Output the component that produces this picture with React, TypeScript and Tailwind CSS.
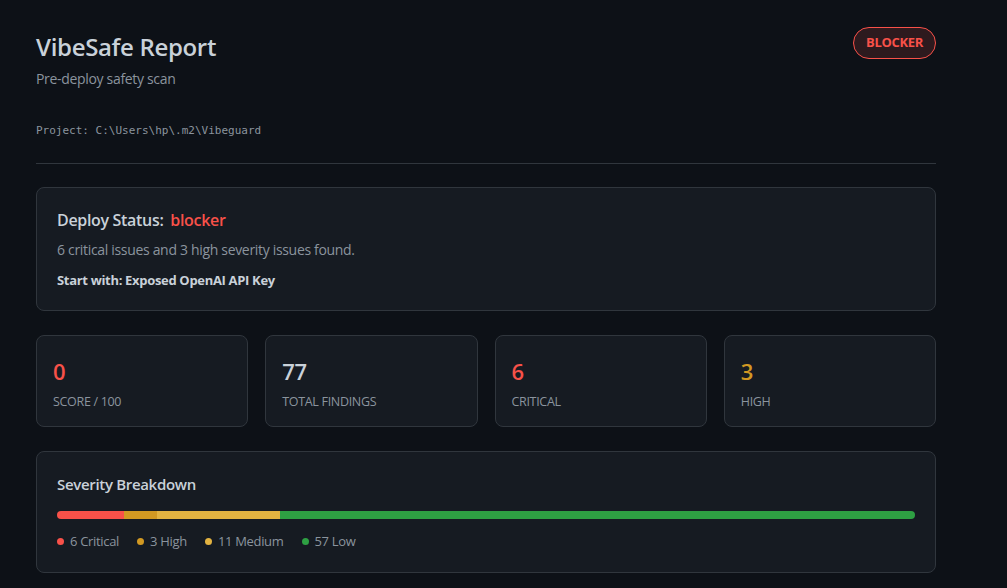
const stats = [
  { value: '0', label: 'Score / 100', color: 'text-[#f85149]' },
  { value: '77', label: 'Total Findings', color: 'text-[#c9d1d9]' },
  { value: '6', label: 'Critical', color: 'text-[#f85149]' },
  { value: '3', label: 'High', color: 'text-[#d29922]' },
];

const severities = [
  { count: 6, label: 'Critical', bar: 'bg-[#f85149]' },
  { count: 3, label: 'High', bar: 'bg-[#d29922]' },
  { count: 11, label: 'Medium', bar: 'bg-[#e3b341]' },
  { count: 57, label: 'Low', bar: 'bg-[#2ea043]' },
];

export default function App() {
  return (
    <div className="min-h-screen bg-[#0d1117] text-[#c9d1d9] font-['Open_Sans','Noto_Sans',sans-serif] tracking-[-0.02em]">
      <div className="max-w-[936px] pl-[36px] pt-[30px] pb-[16px]">
        <header className="flex items-start justify-between">
          <div>
            <h1 className="text-[24px] font-semibold leading-[34px] text-[#c9d1d9]">VibeSafe Report</h1>
            <p className="mt-[4px] text-[14px] text-[#8b949e]">Pre-deploy safety scan</p>
            <p className="mt-[34px] text-[11px] tracking-normal text-[#8b949e] font-['DejaVu_Sans_Mono',monospace]">
              Project: C:\Users\hp\.m2\Vibeguard
            </p>
          </div>
          <span className="mt-[-3px] flex h-[32px] items-center rounded-full border border-[#f85149] bg-[#2d1a1e] px-[12px] text-[13px] font-bold text-[#f85149]">
            BLOCKER
          </span>
        </header>

        <div className="mt-[23px] border-t border-[#30363d]" />

        <section className="mt-[23px] rounded-[8px] border border-[#30363d] bg-[#161b22] px-[20px] pt-[20px] pb-[20px]">
          <h2 className="text-[16px] font-semibold leading-[24px]">
            Deploy Status: <span className="ml-[3px] text-[#f85149]">blocker</span>
          </h2>
          <p className="mt-[7px] text-[14px] text-[#8b949e]">6 critical issues and 3 high severity issues found.</p>
          <p className="mt-[11px] text-[13px] font-bold">Start with: Exposed OpenAI API Key</p>
        </section>

        <div className="mt-[24px] grid grid-cols-4 gap-[17px]">
          {stats.map((s) => (
            <div key={s.label} className="h-[92px] rounded-[8px] border border-[#30363d] bg-[#161b22] px-[16px] pt-[20px]">
              <div className={`text-[22px] font-semibold leading-[30px] ${s.color}`}>{s.value}</div>
              <div className="mt-[7px] text-[12.5px] uppercase text-[#8b949e]">{s.label}</div>
            </div>
          ))}
        </div>

        <section className="mt-[24px] rounded-[8px] border border-[#30363d] bg-[#161b22] px-[20px] pt-[21px] pb-[20px]">
          <h2 className="text-[15px] font-semibold leading-[22px]">Severity Breakdown</h2>
          <div className="mt-[16px] flex h-[8px] overflow-hidden rounded-full">
            {severities.map((s) => (
              <div key={s.label} className={s.bar} style={{ flexGrow: s.count, flexBasis: 0 }} />
            ))}
          </div>
          <div className="mt-[13px] flex gap-[18px] text-[13px] text-[#8b949e]">
            {severities.map((s) => (
              <span key={s.label} className="flex items-center gap-[6px]">
                <span className={`h-[7px] w-[7px] rounded-full ${s.bar}`} />
                {s.count} {s.label}
              </span>
            ))}
          </div>
        </section>
      </div>
    </div>
  );
}
